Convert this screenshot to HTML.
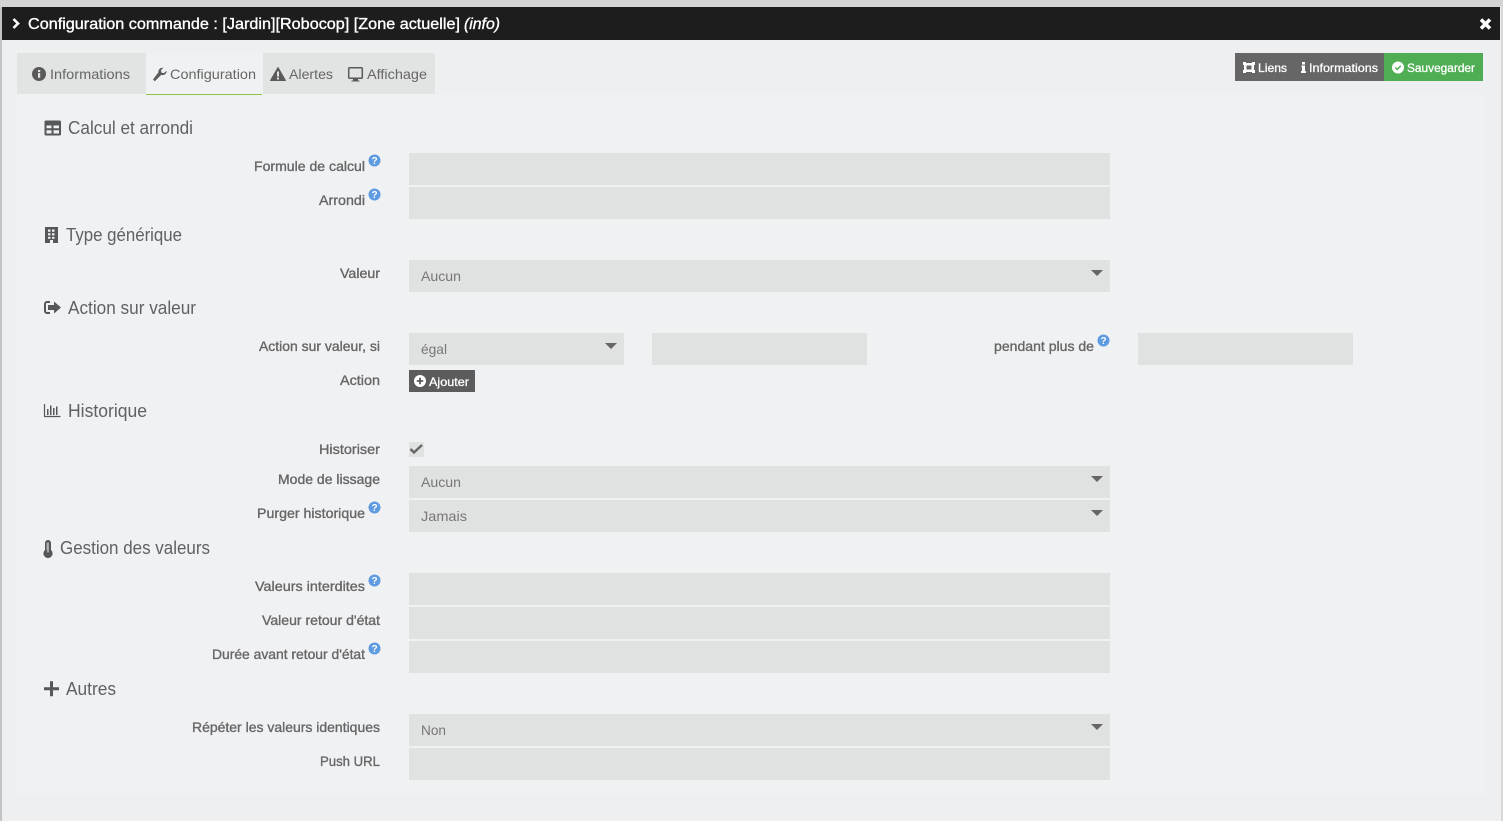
<!DOCTYPE html>
<html lang="fr"><head><meta charset="utf-8"><title>Configuration commande</title>
<style>
html,body{margin:0;padding:0;width:1503px;height:821px;overflow:hidden;background:#eeeff0}
svg{display:block;font-family:"Liberation Sans",Arial,sans-serif}
.h{font-size:18px;fill:#5f6163}
.l{font-size:14px;fill:#666;stroke:#666;stroke-width:.35px}
.t{font-size:14px;fill:#666}
.v{font-size:14px;fill:#777}
.b{font-size:12px;fill:#fff;stroke:#fff;stroke-width:.3px}
.i{fill:#e0e1e1}
.a{fill:#666}
</style></head><body>
<svg xmlns="http://www.w3.org/2000/svg" width="1503" height="821" viewBox="0 0 1503 821">
<rect width="1503" height="821" fill="#eeeff0"/>
<rect width="1503" height="7" fill="#d4d4d4"/>
<rect x="0" y="7" width="2" height="814" fill="#c4c4c4"/>
<rect x="1501" y="7" width="2" height="814" fill="#d8d8d8"/>
<rect x="2" y="7" width="1498" height="33" fill="#1d1d1d"/>
<path d="M13.500 19l4.500 4.500-4.500 4.500" fill="none" stroke="#fff" stroke-width="2.600"/>
<text x="28" y="29" font-size="16" fill="#fff" stroke="#fff" stroke-width=".35" textLength="432" lengthAdjust="spacingAndGlyphs">Configuration commande : [Jardin][Robocop] [Zone actuelle]</text>
<text x="464" y="29" font-size="16" font-style="italic" fill="#fff" stroke="#fff" stroke-width=".35" textLength="36" lengthAdjust="spacingAndGlyphs">(info)</text>
<path d="M1481 19.500l9 9M1490 19.500l-9 9" stroke="#fff" stroke-width="3.600" fill="none"/>

<rect x="17" y="94" width="1468" height="701" fill="#f0f1f3"/>
<rect x="17" y="53" width="418" height="41" fill="#e2e3e3"/>
<rect x="146" y="53" width="117" height="41" fill="#f0f1f3"/>
<rect x="146" y="94" width="116" height="1" fill="#8fc04a"/>

<!-- tab icons -->
<circle cx="39" cy="74" r="7" fill="#5a5a5a"/><rect x="38" y="73" width="2.200" height="4.800" fill="#e2e3e3"/><rect x="38" y="70" width="2.200" height="2" fill="#e2e3e3"/>
<text class="t" x="50" y="79" textLength="80" lengthAdjust="spacingAndGlyphs">Informations</text>
<path d="M153 79.500l1.800 1.800 6.400-6.400c2.200.7 4.200-.2 5-2 .3-.7.3-1.400.2-2.100l-2.600 2.400-2.300-.6-.6-2.300 2.500-2.500c-2.800-.6-5.300 1.600-5 4.600z" fill="#5a5a5a"/>
<text class="t" x="170" y="79" textLength="86" lengthAdjust="spacingAndGlyphs">Configuration</text>
<path d="M278 67.500l7.500 13h-15z" fill="#5a5a5a" stroke="#5a5a5a" stroke-linejoin="round"/><rect x="277" y="71.500" width="2" height="5" fill="#e2e3e3"/><rect x="277" y="77.500" width="2" height="2" fill="#e2e3e3"/>
<text class="t" x="289" y="79" textLength="44" lengthAdjust="spacingAndGlyphs">Alertes</text>
<rect x="348.700" y="67.700" width="13.600" height="10.600" rx="1" fill="none" stroke="#5a5a5a" stroke-width="1.500"/><path d="M353 79h5v1.500h1.500v1h-8v-1h1.500z" fill="#5a5a5a"/>
<text class="t" x="367" y="79" textLength="60" lengthAdjust="spacingAndGlyphs">Affichage</text>

<!-- action buttons -->
<rect x="1235" y="53" width="149" height="28" fill="#666"/>
<rect x="1384" y="53" width="99" height="28" fill="#4fae54"/>
<path fill-rule="evenodd" d="M1243 62h3v1h6v-1h3v3h-1v5h1v3h-3v-1h-6v1h-3v-3h1v-5h-1zm3.500 3.500v4h5v-4z" fill="#fff"/>
<text class="b" x="1258" y="72" textLength="29" lengthAdjust="spacingAndGlyphs">Liens</text>
<path d="M1302 62h3v2.500h-3zM1301.500 65.500h3.500v5.500h1v2h-5v-2h1v-3.500h-.5z" fill="#fff"/>
<text class="b" x="1309" y="72" textLength="69" lengthAdjust="spacingAndGlyphs">Informations</text>
<circle cx="1398" cy="67.500" r="6" fill="#fff"/><path d="M1395.200 67.500l2 2 3.600-3.600" fill="none" stroke="#4fae54" stroke-width="1.500"/>
<text class="b" x="1407" y="72" textLength="68" lengthAdjust="spacingAndGlyphs">Sauvegarder</text>

<!-- headings -->
<path fill-rule="evenodd" d="M46 120.500h13.500a1.500 1.500 0 0 1 1.500 1.500v12a1.500 1.500 0 0 1-1.500 1.500H46a1.500 1.500 0 0 1-1.500-1.500v-12a1.500 1.500 0 0 1 1.500-1.500zm.5 5v2.800h5v-2.800zm7 0v2.800h5.500v-2.800zm-7 4.800v3.200h5v-3.200zm7 0v3.200h5.500v-3.200z" fill="#55575a"/>
<text class="h" x="68" y="134" textLength="125" lengthAdjust="spacingAndGlyphs">Calcul et arrondi</text>
<path fill-rule="evenodd" d="M45 227h13v16h-5v-3h-3v3h-5zm3 2.500v2.200h2.500v-2.200zm4 0v2.200h2.500v-2.200zm-4 3.700v2.200h2.500v-2.200zm4 0v2.200h2.500v-2.200zm-4 3.700v1.800h2.500v-1.800zm4 0v1.800h2.500v-1.800z" fill="#55575a"/>
<text class="h" x="66" y="241" textLength="116" lengthAdjust="spacingAndGlyphs">Type générique</text>
<path d="M50 302h-3a2 2 0 0 0-2 2v7a2 2 0 0 0 2 2h3" fill="none" stroke="#55575a" stroke-width="2"/><path d="M54 301.500l7 6-7 6v-3.500h-6v-5h6z" fill="#55575a"/>
<text class="h" x="68" y="314" textLength="128" lengthAdjust="spacingAndGlyphs">Action sur valeur</text>
<path d="M44.500 404v12.500h16" fill="none" stroke="#55575a" stroke-width="1.200"/><path d="M47 409h1.500v6H47zM50 405.500h1.500V415H50zM53 408h1.500v7H53zM56 406.500h1.500V415H56z" fill="#55575a"/>
<text class="h" x="68" y="417" textLength="79" lengthAdjust="spacingAndGlyphs">Historique</text>
<path d="M45 543a3 3 0 0 1 6 0v7a4.600 4.600 0 1 1-6 0z" fill="#55575a"/><path d="M47.300 542.500h1.400v10h-1.400z" fill="#c9cacb"/><path d="M46.500 543h.7v7h-.7z" fill="#f0f1f3" opacity=".5"/>
<text class="h" x="60" y="554" textLength="150" lengthAdjust="spacingAndGlyphs">Gestion des valeurs</text>
<path d="M44 687.200h6v-6h3v6h6v3h-6v6h-3v-6h-6z" fill="#55575a"/>
<text class="h" x="66" y="695" textLength="50" lengthAdjust="spacingAndGlyphs">Autres</text>

<!-- labels -->
<text class="l" x="254" y="171" textLength="111" lengthAdjust="spacingAndGlyphs">Formule de calcul</text>
<text class="l" x="319" y="205" textLength="46" lengthAdjust="spacingAndGlyphs">Arrondi</text>
<text class="l" x="340" y="278" textLength="40" lengthAdjust="spacingAndGlyphs">Valeur</text>
<text class="l" x="259" y="351" textLength="121" lengthAdjust="spacingAndGlyphs">Action sur valeur, si</text>
<text class="l" x="994" y="351" textLength="100" lengthAdjust="spacingAndGlyphs">pendant plus de</text>
<text class="l" x="340" y="385" textLength="40" lengthAdjust="spacingAndGlyphs">Action</text>
<text class="l" x="319" y="454" textLength="61" lengthAdjust="spacingAndGlyphs">Historiser</text>
<text class="l" x="278" y="484" textLength="102" lengthAdjust="spacingAndGlyphs">Mode de lissage</text>
<text class="l" x="257" y="518" textLength="108" lengthAdjust="spacingAndGlyphs">Purger historique</text>
<text class="l" x="255" y="591" textLength="110" lengthAdjust="spacingAndGlyphs">Valeurs interdites</text>
<text class="l" x="262" y="625" textLength="118" lengthAdjust="spacingAndGlyphs">Valeur retour d'état</text>
<text class="l" x="212" y="659" textLength="153" lengthAdjust="spacingAndGlyphs">Durée avant retour d'état</text>
<text class="l" x="192" y="732" textLength="188" lengthAdjust="spacingAndGlyphs">Répéter les valeurs identiques</text>
<text class="l" x="320" y="766" textLength="60" lengthAdjust="spacingAndGlyphs">Push URL</text>

<!-- help icons -->
<g font-size="10" font-weight="bold" text-anchor="middle" fill="#fff">
<circle cx="374.500" cy="160.500" r="6" fill="#5f9be0"/><text x="374.500" y="164">?</text>
<circle cx="374.500" cy="194.500" r="6" fill="#5f9be0"/><text x="374.500" y="198">?</text>
<circle cx="1103.500" cy="340.500" r="6" fill="#5f9be0"/><text x="1103.500" y="344">?</text>
<circle cx="374.500" cy="507.500" r="6" fill="#5f9be0"/><text x="374.500" y="511">?</text>
<circle cx="374.500" cy="580.500" r="6" fill="#5f9be0"/><text x="374.500" y="584">?</text>
<circle cx="374.500" cy="648.500" r="6" fill="#5f9be0"/><text x="374.500" y="652">?</text>
</g>

<!-- inputs -->
<rect class="i" x="409" y="153" width="701" height="32"/>
<rect class="i" x="409" y="187" width="701" height="32"/>
<rect class="i" x="409" y="260" width="701" height="32"/>
<rect class="i" x="409" y="333" width="215" height="32"/>
<rect class="i" x="652" y="333" width="215" height="32"/>
<rect class="i" x="1138" y="333" width="215" height="32"/>
<rect class="i" x="409" y="466" width="701" height="32"/>
<rect class="i" x="409" y="500" width="701" height="32"/>
<rect class="i" x="409" y="573" width="701" height="32"/>
<rect class="i" x="409" y="607" width="701" height="32"/>
<rect class="i" x="409" y="641" width="701" height="32"/>
<rect class="i" x="409" y="714" width="701" height="32"/>
<rect class="i" x="409" y="748" width="701" height="32"/>

<!-- select values -->
<text class="v" x="421" y="281" textLength="40" lengthAdjust="spacingAndGlyphs">Aucun</text>
<text class="v" x="421" y="354" textLength="26" lengthAdjust="spacingAndGlyphs">égal</text>
<text class="v" x="421" y="487" textLength="40" lengthAdjust="spacingAndGlyphs">Aucun</text>
<text class="v" x="421" y="521" textLength="46" lengthAdjust="spacingAndGlyphs">Jamais</text>
<text class="v" x="421" y="735" textLength="25" lengthAdjust="spacingAndGlyphs">Non</text>

<!-- arrows -->
<path class="a" d="M1091 270h12l-6 6z"/>
<path class="a" d="M605 343h12l-6 6z"/>
<path class="a" d="M1091 476h12l-6 6z"/>
<path class="a" d="M1091 510h12l-6 6z"/>
<path class="a" d="M1091 724h12l-6 6z"/>

<!-- ajouter -->
<rect x="409" y="370" width="66" height="22" fill="#5c5c5c"/>
<circle cx="420" cy="381" r="6" fill="#fff"/><path d="M416.800 381h6.400M420 377.800v6.400" stroke="#5c5c5c" stroke-width="1.800"/>
<text class="b" x="429" y="386" textLength="40" lengthAdjust="spacingAndGlyphs">Ajouter</text>

<!-- checkbox -->
<rect class="i" x="409" y="442" width="15" height="15"/>
<path d="M410.500 449l3.500 3.500 8-7.500" fill="none" stroke="#666" stroke-width="2.400"/>
</svg>
</body></html>
